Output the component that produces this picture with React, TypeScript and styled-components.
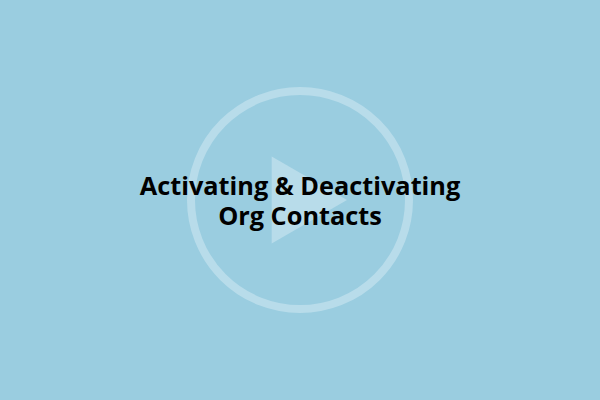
import React from 'react';
import styled, { createGlobalStyle } from 'styled-components';

const GlobalStyle = createGlobalStyle`
  html, body {
    margin: 0;
    padding: 0;
  }
`;

const Stage = styled.div`
  position: relative;
  width: 600px;
  height: 400px;
  display: flex;
  align-items: center;
  justify-content: center;
  background: #9acde0;
  overflow: hidden;
`;

const PlayMark = styled.svg`
  position: absolute;
  left: 187px;
  top: 87px;
  width: 226px;
  height: 226px;
`;

const Title = styled.h1`
  position: relative;
  margin: 0;
  font-family: 'Open Sans', sans-serif;
  font-size: 25.3px;
  font-weight: 700;
  line-height: 30px;
  color: #000;
  text-align: center;
`;

const App: React.FC = () => (
  <Stage>
    <GlobalStyle />
    <PlayMark viewBox="0 0 226 226">
      <circle cx="113" cy="113" r="109" fill="none" stroke="#b8dcea" strokeWidth="8" />
      <polygon points="84.7,69.5 160,113 84.7,156.5" fill="#b8dcea" />
    </PlayMark>
    <Title>
      Activating &amp; Deactivating
      <br />
      Org Contacts
    </Title>
  </Stage>
);

export default App;
